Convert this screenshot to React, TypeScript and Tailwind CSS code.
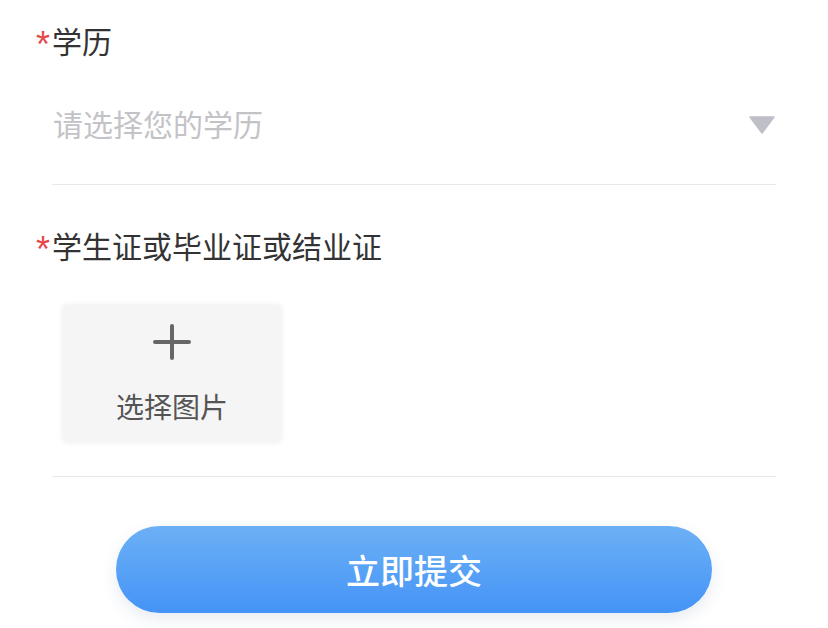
import React from 'react';

const font = { fontFamily: '"Noto Sans CJK SC", "Noto Sans", sans-serif' };

function FieldLabel({ children }: { children: React.ReactNode }) {
  return (
    <div className="flex h-[60px] items-center pl-[36px] text-[30px] text-[#333333]">
      <span
        className="mr-[2px] mt-[10px] text-[36px] leading-none text-[#e5484d]"
        style={{ fontFamily: '"Liberation Sans", sans-serif' }}
      >
        *
      </span>
      <span>{children}</span>
    </div>
  );
}

export default function App() {
  return (
    <div className="h-[628px] w-[828px] overflow-hidden bg-white" style={font}>
      <div className="mt-[10px]">
        <FieldLabel>学历</FieldLabel>
      </div>

      <div className="ml-[52px] flex h-[115px] w-[724px] items-center justify-between border-b border-[#e8e8e8] pb-[8px]">
        <span className="pl-[1px] text-[30px] text-[#c3c3c7]">请选择您的学历</span>
        <svg width="26" height="18" viewBox="0 0 26 18" className="mr-[1px] mt-[4px]">
          <path d="M1 1 H25 L13 17 Z" fill="#bfbfc8" stroke="#bfbfc8" strokeLinejoin="round" strokeWidth="1.5" />
        </svg>
      </div>

      <div className="mt-[30px]">
        <FieldLabel>学生证或毕业证或结业证</FieldLabel>
      </div>

      <div className="ml-[63px] mt-[30px] flex h-[137px] w-[218px] flex-col items-center rounded-[4px] bg-[#f5f5f5] shadow-[0_0_6px_rgba(0,0,0,0.08)]">
        <svg width="38" height="36" viewBox="0 0 38 36" className="mt-[19px]">
          <path d="M19 2 V34 M2 18 H36" stroke="#666666" strokeWidth="4" strokeLinecap="round" />
        </svg>
        <span className="mt-[32px] text-[28px] leading-none text-[#555555]">选择图片</span>
      </div>

      <div className="ml-[52px] mt-[34px] w-[724px] border-b border-[#e8e8e8]" />

      <div className="mt-[49px] flex justify-center">
        <button className="h-[87px] w-[596px] rounded-full bg-gradient-to-b from-[#6cb0f5] to-[#4493f6] text-[34px] font-medium text-white shadow-[0_6px_16px_rgba(60,90,140,0.12)]">
          立即提交
        </button>
      </div>
    </div>
  );
}
